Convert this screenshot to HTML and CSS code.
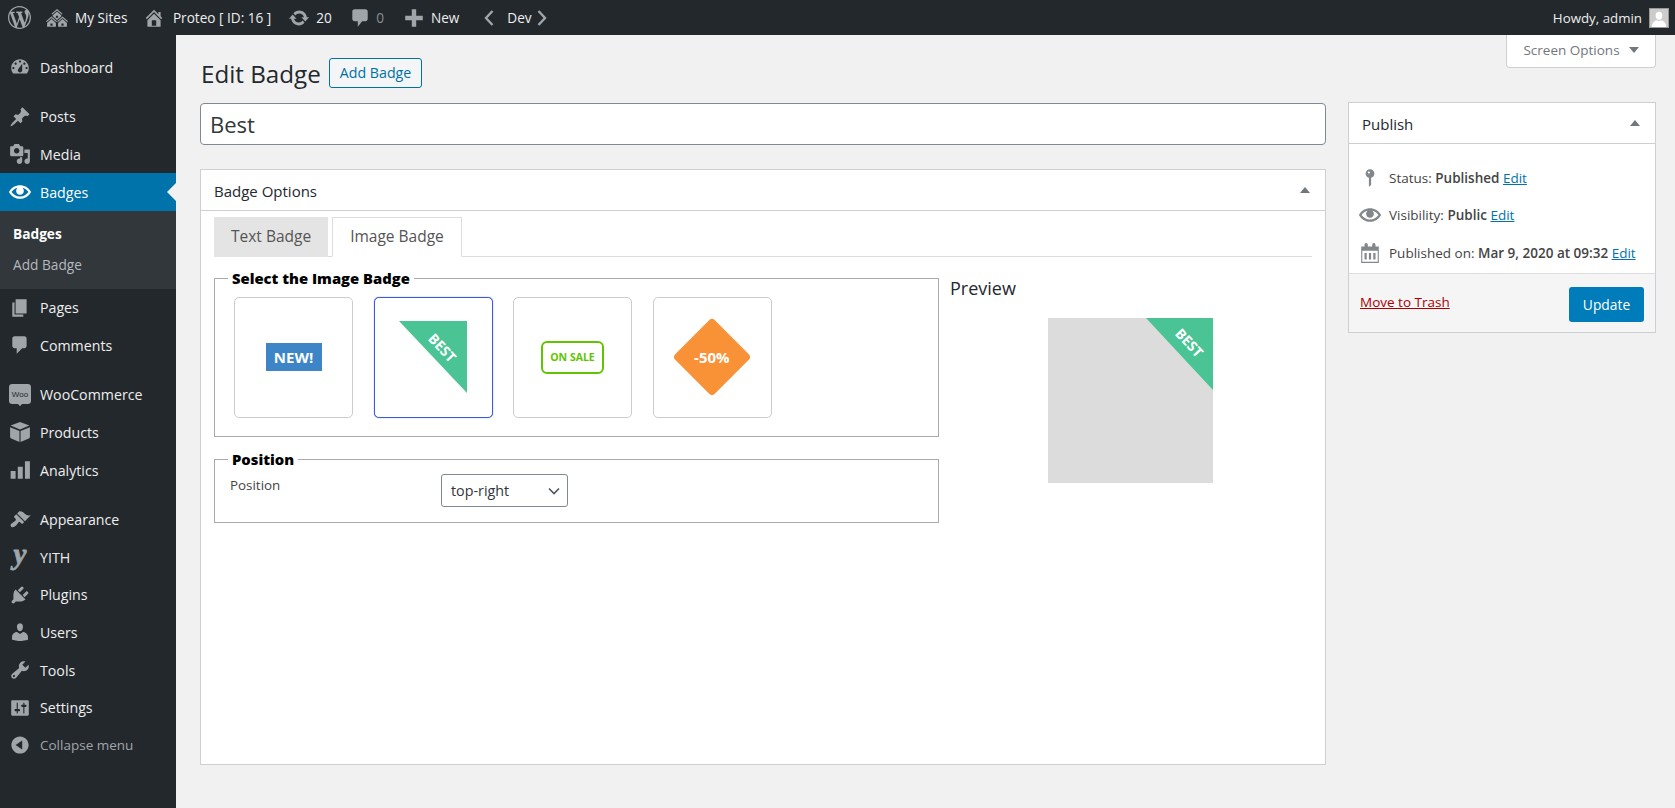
FILE: index.html
```html
<!DOCTYPE html>
<html lang="en">
<head>
   <meta charset="UTF-8">
   <title>Edit Badge</title>
   <link rel="stylesheet" href="styles.css">
</head>
<body>
   <header class="adminbar">
      <a class="bar-item bar-logo"><svg class="bar-icon logo-icon" viewBox="0 0 20 20"><path d="M20 10c0-5.51-4.49-10-10-10C4.48 0 0 4.49 0 10c0 5.52 4.48 10 10 10 5.51 0 10-4.48 10-10zM7.78 15.37L4.37 6.22c.55-.02 1.17-.08 1.17-.08.5-.06.44-1.13-.06-1.11 0 0-1.45.11-2.37.11-.18 0-.37 0-.58-.01C4.12 2.69 6.87 1.11 10 1.11c2.33 0 4.45.87 6.05 2.34-.68-.11-1.65.39-1.65 1.58 0 .74.45 1.36.9 2.1.35.61.55 1.36.55 2.46 0 1.49-1.4 5-1.4 5l-3.03-8.37c.54-.02.82-.17.82-.17.5-.05.44-1.25-.06-1.22 0 0-1.44.12-2.38.12-.87 0-2.33-.12-2.33-.12-.5-.03-.56 1.2-.06 1.22l.92.08 1.26 3.41zM17.41 10c.24-.64.74-1.87.43-4.25.7 1.29 1.05 2.71 1.05 4.25 0 3.29-1.73 6.24-4.4 7.78.97-2.59 1.94-5.2 2.92-7.78zM6.1 18.09C3.12 16.65 1.11 13.53 1.11 10c0-1.3.23-2.48.72-3.59C3.25 10.3 4.67 14.2 6.1 18.09zm4.03-6.63l2.58 6.98c-.86.29-1.76.45-2.71.45-.79 0-1.57-.11-2.29-.33.81-2.38 1.62-4.74 2.42-7.1z"/></svg></a>
      <a class="bar-item bar-sites"><svg class="bar-icon" viewBox="0 0 20 20"><path d="M14.27 6.87L10 3.14 5.73 6.87 5 6.14l5-4.38 5 4.38zM14 8.42l-4.05 3.43L6 8.38v-.74l4-3.5 4 3.5v.78zM11 9.7V8H9v1.7h2zm-1.73 4.03L5 10 .73 13.73 0 13l5-4.38L10 13zm10 0L15 10l-4.27 3.73L10 13l5-4.38L20 13zM5 11l4 3.5V18H1v-3.5zm10 0l4 3.5V18h-8v-3.5zm-9 6v-2H4v2h2zm10 0v-2h-2v2h2z"/></svg>My Sites</a>
      <a class="bar-item bar-home"><svg class="bar-icon" viewBox="0 0 20 20"><path d="M16 8.5l1.53 1.53-1.06 1.06L10 4.62l-6.47 6.47-1.06-1.06L10 2.5l4 4v-2h2v4zm-6-2.46l6 5.99V18H4v-5.97zM12 17v-5H8v5h4z"/></svg>Proteo [ ID: 16 ]</a>
      <a class="bar-item bar-updates"><svg class="bar-icon" viewBox="0 0 20 20"><path d="M10.2 3.28c3.53 0 6.43 2.61 6.92 6h2.08l-3.5 4-3.5-4h2.32c-.45-1.97-2.21-3.44-4.32-3.44-1.45 0-2.73.71-3.54 1.78L4.95 5.66C6.23 4.2 8.11 3.28 10.2 3.28zm-.4 13.44c-3.52 0-6.43-2.61-6.92-6H.8l3.5-4c1.17 1.33 2.33 2.67 3.5 4H5.48c.45 1.97 2.21 3.44 4.32 3.44 1.45 0 2.73-.71 3.54-1.78l1.71 1.95c-1.28 1.46-3.15 2.39-5.25 2.39z"/></svg>20</a>
      <a class="bar-item bar-comments"><svg class="bar-icon" viewBox="0 0 20 20"><path d="M5 2h10c1.100 0 2 .9 2 2v7c0 1.100-.9 2-2 2h-3l-4 5v-5H5c-1.100 0-2-.9-2-2V4c0-1.100.9-2 2-2z"/></svg><span class="muted">0</span></a>
      <a class="bar-item bar-new"><svg class="bar-icon" viewBox="0 0 20 20"><path d="M18 8v4h-6v6H8v-6H2V8h6V2h4v6h6z"/></svg>New</a>
      <a class="bar-item bar-dev"><svg class="bar-chevron" viewBox="0 0 12 18"><path d="M9.500 2L3 9l6.500 7"/></svg>Dev<svg class="bar-chevron" viewBox="0 0 12 18"><path d="M2.500 2L9 9l-6.500 7"/></svg></a>
      <a class="bar-item bar-user">Howdy, admin<span class="avatar"><svg viewBox="0 0 20 20"><path d="M10 3c2.300 0 3.800 1.800 3.800 4.300S12.300 12 10 12 6.200 9.800 6.200 7.300 7.700 3 10 3zM2 20c0-4 2.500-7 5.500-7.500 1.600 1 3.400 1 5 0C15.500 13 18 16 18 20z"/></svg></span></a>
   </header>

   <div class="layout">
      <nav class="sidebar">
         <a class="menu-item"><svg class="menu-icon" viewBox="0 0 20 20"><path d="M3.760 16h12.480c1.100-1.370 1.760-3.110 1.760-5 0-4.420-3.580-8-8-8s-8 3.580-8 8c0 1.890.660 3.630 1.760 5zM10 4c.550 0 1 .450 1 1s-.450 1-1 1-1-.450-1-1 .450-1 1-1zM6 6c.550 0 1 .450 1 1s-.450 1-1 1-1-.450-1-1 .450-1 1-1zm8 0c.550 0 1 .450 1 1s-.450 1-1 1-1-.450-1-1 .450-1 1-1zm-5.370 5.550L12 7v6c0 1.100-.9 2-2 2s-2-.9-2-2c0-.570.240-1.080.630-1.450zM4 10c.550 0 1 .450 1 1s-.450 1-1 1-1-.450-1-1 .450-1 1-1zm12 0c.550 0 1 .450 1 1s-.450 1-1 1-1-.450-1-1 .450-1 1-1z"/></svg>Dashboard</a>

         <a class="menu-item menu-gap"><svg class="menu-icon" viewBox="0 0 20 20"><path d="M10.440 3.020l1.820-1.820 6.360 6.350-1.830 1.820c-1.050-.680-2.480-.570-3.410.360l-.750.750c-.920.930-1.040 2.350-.350 3.410l-1.830 1.820-2.410-2.410-2.800 2.790c-.420.420-3.380 2.710-3.800 2.290s1.860-3.390 2.280-3.810l2.790-2.790L4.100 9.360l1.830-1.820c1.050.690 2.480.570 3.400-.360l.750-.750c.930-.920 1.050-2.350.360-3.410z"/></svg>Posts</a>
         <a class="menu-item"><svg class="menu-icon" viewBox="0 0 20 20"><path d="M13 11V4c0-.550-.450-1-1-1h-1.670L9 1H5L3.670 3H2c-.550 0-1 .450-1 1v7c0 .550.450 1 1 1h10c.550 0 1-.450 1-1zM7 4.500c1.380 0 2.500 1.120 2.500 2.500S8.380 9.500 7 9.500 4.500 8.380 4.500 7 5.620 4.500 7 4.500zM14 6h5v10.500c0 1.380-1.120 2.500-2.500 2.500S14 17.880 14 16.500s1.120-2.500 2.500-2.500c.170 0 .340.020.500.050V9h-3V6zm-4 8.050V13h2v3.500c0 1.380-1.120 2.500-2.500 2.500S7 17.880 7 16.500 8.120 14 9.500 14c.170 0 .340.020.500.050z"/></svg>Media</a>
         <a class="menu-item active"><svg class="menu-icon" viewBox="0 0 20 20"><path d="M19.700 9.400C17.700 6 14 3.900 10 3.900S2.300 6 .3 9.400L0 10l.3.6c2 3.400 5.700 5.500 9.700 5.500s7.700-2.100 9.700-5.500l.3-.6-.3-.6zM10 14.100c-3.100 0-6-1.600-7.700-4.100C3.600 8 5.700 6.600 8 6.100c-.9.6-1.500 1.700-1.500 2.900 0 1.900 1.600 3.500 3.500 3.500s3.500-1.600 3.500-3.500c0-1.200-.6-2.300-1.500-2.900 2.300.5 4.400 1.900 5.700 3.900-1.700 2.500-4.600 4.100-7.700 4.100z"/></svg>Badges</a>
         <div class="submenu">
            <a class="sub-item current">Badges</a>
            <a class="sub-item">Add Badge</a>
         </div>
         <a class="menu-item"><svg class="menu-icon" viewBox="0 0 20 20"><path d="M6 15V2h10v13H6zm-1 1h8v2H3V5h2v11z"/></svg>Pages</a>
         <a class="menu-item"><svg class="menu-icon" viewBox="0 0 20 20"><path d="M5 2h9c1.100 0 2 .9 2 2v7c0 1.100-.9 2-2 2h-2l-5 5v-5H5c-1.100 0-2-.9-2-2V4c0-1.100.9-2 2-2z"/></svg>Comments</a>

         <a class="menu-item menu-gap"><svg class="menu-icon" viewBox="0 0 22 22"><path d="M3 0h16c1.700 0 3 1.300 3 3v14c0 1.700-1.300 3-3 3h-6l-2 2.200L9 20H3c-1.700 0-3-1.300-3-3V3c0-1.700 1.300-3 3-3z"/><text class="woo-text" x="11" y="13" text-anchor="middle">Woo</text></svg>WooCommerce</a>
         <a class="menu-item"><svg class="menu-icon" viewBox="0 0 20 20"><path d="M10 .8l8.500 3.400-8.500 3.600-8.500-3.600zM1 5.600l8.500 3.500V19L2 16a1.500 1.500 0 0 1-1-1.400zM19 5.600v9a1.500 1.500 0 0 1-1 1.400l-7.500 3V9.100z"/></svg>Products</a>
         <a class="menu-item"><svg class="menu-icon" viewBox="0 0 20 20"><path d="M1.500 11H6v7H1.500zM8 7h4.500v11H8zM14.500 2H19v16h-4.500z"/></svg>Analytics</a>

         <a class="menu-item menu-gap"><svg class="menu-icon" viewBox="0 0 20 20"><path d="M14.480 11.060L7.410 3.990l1.500-1.500c.5-.560 2.300-.470 3.510.320 1.210.8 1.430 1.280 2.910 2.100 1.180.640 2.450 1.260 4.450.85zm-.710.710L6.700 4.700 4.930 6.470c-.390.390-.390 1.020 0 1.410l1.060 1.060c.390.390.390 1.030 0 1.420-.6.6-1.430 1.110-2.210 1.690-.350.260-.7.530-1.010.840C1.430 13.230.990 15.130 2 16.060c.920.990 2.810.550 4.170-.8.310-.310.580-.660.840-1.010.580-.780 1.090-1.610 1.690-2.210.390-.390 1.020-.390 1.410 0l1.060 1.060c.390.390 1.020.390 1.410 0z"/></svg>Appearance</a>
         <a class="menu-item"><span class="yith-glyph">y</span>YITH</a>
         <a class="menu-item"><svg class="menu-icon" viewBox="0 0 20 20"><path d="M13.110 4.360L9.870 7.600 8 5.730l3.240-3.240c.350-.340 1.050-.2 1.560.320.520.510.660 1.210.310 1.550zm-8 1.770l.910-1.120 9.010 9.010-1.190.840c-.710.710-2.630 1.160-3.820 1.160H6.140L4.900 17.260c-.590.590-1.540.590-2.120 0-.590-.580-.590-1.530 0-2.120l1.240-1.240v-3.880c0-1.130.4-3.190 1.090-3.890zm7.260 3.970l3.240-3.240c.340-.350 1.040-.210 1.550.310.520.510.660 1.210.31 1.550l-3.240 3.250z"/></svg>Plugins</a>
         <a class="menu-item"><svg class="menu-icon" viewBox="0 0 20 20"><path d="M10 9.250c-2.270 0-2.730-3.440-2.730-3.440C7 4.020 7.820 2 9.970 2c2.160 0 2.980 2.020 2.710 3.810 0 0-.410 3.440-2.680 3.440zm0 2.570L12.720 10c2.390 0 4.520 2.330 4.520 4.530v2.490s-3.650 1.130-7.240 1.130c-3.650 0-7.240-1.130-7.240-1.130v-2.490c0-2.250 1.940-4.480 4.470-4.480z"/></svg>Users</a>
         <a class="menu-item"><svg class="menu-icon" viewBox="0 0 20 20"><path d="M16.680 9.770c-1.340 1.340-3.300 1.670-4.950.990l-5.410 6.520c-.990.990-2.590.990-3.580 0s-.990-2.590 0-3.570l6.520-5.420c-.680-1.650-.350-3.610.990-4.950 1.280-1.280 3.120-1.620 4.720-1.060l-2.890 2.890 2.820 2.820 2.860-2.870c.530 1.580.180 3.390-1.080 4.650zM3.810 16.210c.4.390 1.040.390 1.430 0 .4-.4.4-1.040 0-1.430-.390-.4-1.030-.4-1.430 0-.390.390-.390 1.030 0 1.430z"/></svg>Tools</a>
         <a class="menu-item"><svg class="menu-icon" viewBox="0 0 20 20"><path d="M18 16V4c0-.550-.450-1-1-1H3c-.550 0-1 .450-1 1v12c0 .550.450 1 1 1h14c.550 0 1-.450 1-1zM8 11h1c.550 0 1 .450 1 1s-.450 1-1 1H8v1.500c0 .280-.220.5-.5.5s-.5-.220-.5-.5V13H6c-.550 0-1-.450-1-1s.450-1 1-1h1V5.500c0-.280.220-.5.5-.5s.5.220.5.5V11zm5-2h-1c-.550 0-1-.450-1-1s.450-1 1-1h1V5.500c0-.280.220-.5.5-.5s.5.220.5.5V7h1c.550 0 1 .450 1 1s-.450 1-1 1h-1v5.500c0 .280-.220.5-.5.5s-.5-.220-.5-.5V9z"/></svg>Settings</a>
         <a class="menu-item collapse"><svg class="menu-icon" viewBox="0 0 20 20"><path d="M10 2.160c4.330 0 7.840 3.510 7.840 7.840s-3.510 7.840-7.840 7.840S2.160 14.330 2.160 10 5.710 2.160 10 2.160zm2 11.840V6l-6 4z"/></svg>Collapse menu</a>
      </nav>

      <main class="wrap">
         <div class="col-main">
            <div class="page-head">
               <h1>Edit Badge</h1>
               <a class="add-btn">Add Badge</a>
            </div>
            <input class="title-input" type="text" value="Best">

            <section class="postbox options-box">
               <div class="postbox-head">
                  <h2>Badge Options</h2>
                  <span class="toggle"></span>
               </div>
               <div class="tabs">
                  <a class="tab">Text Badge</a>
                  <a class="tab tab-on">Image Badge</a>
               </div>
               <div class="panel">
                  <div class="panel-left">
                     <fieldset class="group">
                        <legend>Select the Image Badge</legend>
                        <div class="cards">
                           <div class="card">
                              <span class="badge-new">NEW!</span>
                           </div>
                           <div class="card card-on">
                              <div class="badge-best">
                                 <svg viewBox="0 0 68 72"><path d="M0 0H68V72z"/></svg>
                                 <span>BEST</span>
                              </div>
                           </div>
                           <div class="card">
                              <span class="badge-sale">ON SALE</span>
                           </div>
                           <div class="card">
                              <div class="badge-off"><span>-50%</span></div>
                           </div>
                        </div>
                     </fieldset>
                     <fieldset class="group group-position">
                        <legend>Position</legend>
                        <div class="field-row">
                           <label class="field-label">Position</label>
                           <div class="select-box">
                              <select><option>top-right</option></select>
                              <svg viewBox="0 0 12 8"><path d="M1 1.500l5 5 5-5"/></svg>
                           </div>
                        </div>
                     </fieldset>
                  </div>
                  <div class="preview">
                     <h3>Preview</h3>
                     <div class="preview-img">
                        <div class="preview-ribbon">
                           <svg viewBox="0 0 67 72"><path d="M0 0H67V72z"/></svg>
                           <span>BEST</span>
                        </div>
                     </div>
                  </div>
               </div>
            </section>
         </div>

         <aside class="col-side">
            <a class="screen-tab">Screen Options <i class="caret"></i></a>
            <section class="postbox publish">
               <div class="postbox-head">
                  <h2>Publish</h2>
                  <span class="toggle"></span>
               </div>
               <div class="publish-rows">
                  <div class="pub-row"><svg class="pub-icon" viewBox="0 0 20 20"><path fill-rule="evenodd" d="M14 6c0 1.860-1.280 3.410-3 3.860V16c0 1-2 2-2 2V9.860c-1.720-.450-3-2-3-3.860 0-2.210 1.790-4 4-4s4 1.790 4 4zM8 5c0 .550.450 1 1 1s1-.450 1-1-.450-1-1-1-1 .450-1 1z"/></svg><span>Status: <b>Published</b> <a>Edit</a></span></div>
                  <div class="pub-row"><svg class="pub-icon" viewBox="0 0 20 20"><path d="M19.700 9.400C17.700 6 14 3.900 10 3.900S2.300 6 .3 9.400L0 10l.3.6c2 3.400 5.700 5.500 9.700 5.500s7.700-2.100 9.700-5.500l.3-.6-.3-.6zM10 14.100c-3.100 0-6-1.600-7.700-4.100C3.600 8 5.700 6.600 8 6.100c-.9.6-1.500 1.700-1.500 2.900 0 1.900 1.600 3.500 3.500 3.500s3.500-1.600 3.500-3.500c0-1.200-.6-2.300-1.500-2.900 2.300.5 4.400 1.900 5.700 3.900-1.700 2.500-4.600 4.100-7.700 4.100z"/></svg><span>Visibility: <b>Public</b> <a>Edit</a></span></div>
                  <div class="pub-row"><svg class="pub-icon" viewBox="0 0 20 20"><path fill-rule="evenodd" d="M15 4h3v15H2V4h3V2.500a1.500 1.500 0 0 1 3 0V4h4V2.500a1.500 1.500 0 0 1 3 0zM3 18h14V8H3zM5 10h2v6H5zM9 10h2v6H9zM13 10h2v6h-2z"/></svg><span>Published on: <b>Mar 9, 2020 at 09:32</b> <a>Edit</a></span></div>
               </div>
               <div class="publish-foot">
                  <a class="trash">Move to Trash</a>
                  <a class="update-btn">Update</a>
               </div>
            </section>
         </aside>
      </main>
   </div>
</body>
</html>
```

FILE: styles.css
```css
* {
   box-sizing: border-box;
}

html, body {
   height: 100%;
}

body {
   margin: 0;
   background: #f1f1f1;
   color: #444;
   font-family: "Open Sans", "Noto Sans", sans-serif;
   font-size: 13.5px;
   overflow: hidden;
}

/* Admin bar */
.adminbar {
   display: flex;
   align-items: center;
   height: 35px;
   background: #23282d;
   color: #eee;
   font-size: 13.6px;
}

.bar-item {
   display: flex;
   align-items: center;
}

.bar-icon {
   width: 22px;
   height: 22px;
   fill: #a0a5aa;
   fill-rule: evenodd;
}

.logo-icon {
   width: 23px;
   height: 23px;
}

.bar-logo { margin-left: 8px; }
.bar-sites { margin-left: 15px; gap: 7px; }
.bar-home { margin-left: 15.5px; gap: 8px; }
.bar-updates { margin-left: 17px; gap: 6px; }
.bar-comments { margin-left: 17.3px; gap: 5px; }
.bar-new { margin-left: 19px; gap: 6px; }
.bar-dev { margin-left: 24px; gap: 4px; }

.muted {
   color: #8a8f94;
}

.bar-chevron {
   width: 12px;
   height: 18px;
   fill: none;
   stroke: #a0a5aa;
   stroke-width: 2.4;
}

.bar-dev .bar-chevron:first-child {
   margin-right: 8px;
}

.bar-user {
   margin-left: auto;
   margin-right: 6px;
   gap: 7px;
   font-size: 13.3px;
}

.avatar {
   display: block;
   width: 20px;
   height: 20px;
   background: #ccc;
   border: 1px solid #999;
}

.avatar svg {
   display: block;
   fill: #fff;
}

/* Sidebar */
.layout {
   display: flex;
   height: calc(100% - 35px);
}

.sidebar {
   flex: 0 0 176px;
   padding-top: 13.5px;
   background: #23282d;
   color: #eee;
   font-size: 14.2px;
}

.menu-item {
   display: flex;
   align-items: center;
   position: relative;
   height: 37.6px;
   padding-left: 9px;
}

.menu-gap {
   margin-top: 12px;
}

.menu-icon {
   flex: none;
   width: 22px;
   height: 22px;
   margin-right: 9px;
   fill: #a0a5aa;
   fill-rule: evenodd;
}

.woo-text {
   fill: #23282d;
   font-family: "Liberation Sans", sans-serif;
   font-size: 8px;
}

.yith-glyph {
   flex: none;
   width: 22px;
   margin: -6px 9px 0 0;
   color: #a0a5aa;
   font-family: "Liberation Serif", serif;
   font-size: 29px;
   font-style: italic;
   font-weight: bold;
   line-height: 22px;
   text-align: center;
   -webkit-text-stroke: 0.8px #a0a5aa;
}

.active {
   background: #0073aa;
   color: #fff;
}

.active .menu-icon {
   fill: #fff;
}

.active::after {
   content: "";
   position: absolute;
   top: 10px;
   right: 0;
   border: 9px solid transparent;
   border-right-color: #f1f1f1;
   border-left-width: 0;
}

.submenu {
   display: flex;
   flex-direction: column;
   height: 78px;
   padding-top: 8px;
   background: #32373c;
   font-size: 13.7px;
}

.sub-item {
   height: 31px;
   padding-left: 13px;
   line-height: 30px;
   color: #b4b9be;
}

.sub-item.current {
   color: #fff;
   font-weight: 700;
}

.collapse {
   color: #a0a5aa;
   font-size: 13.5px;
}

/* Main area */
.wrap {
   flex: 1;
   display: flex;
   gap: 22px;
   padding: 0 19px 0 24px;
}

.col-main {
   width: 1126px;
   padding-top: 23px;
}

.page-head {
   display: flex;
   align-items: center;
   gap: 8px;
   height: 30px;
}

h1 {
   margin: 0;
   color: #23282d;
   font-size: 24.2px;
   font-weight: 400;
   padding-left: 1px;
}

.add-btn {
   display: block;
   height: 30px;
   padding: 0 10px;
   border: 1px solid #0071a1;
   border-radius: 3px;
   background: #f3f5f6;
   color: #0071a1;
   font-size: 14.2px;
   line-height: 27px;
}

.title-input {
   display: block;
   width: 100%;
   height: 42px;
   margin-top: 15px;
   padding: 0 9px;
   border: 1px solid #7e8993;
   border-radius: 4px;
   background: #fff;
   color: #32373c;
   font-family: inherit;
   font-size: 22px;
}

.postbox {
   background: #fff;
   border: 1px solid #ccd0d4;
}

.options-box {
   display: flex;
   flex-direction: column;
   height: 596px;
   margin-top: 24px;
}

.postbox-head {
   display: flex;
   align-items: center;
   justify-content: space-between;
   height: 41px;
   padding: 0 13px;
   border-bottom: 1px solid #ccd0d4;
}

.postbox-head h2 {
   margin: 0;
   padding-top: 1px;
   color: #23282d;
   font-size: 15px;
   font-weight: 400;
}

.toggle {
   margin-right: 2px;
   border: 5px solid transparent;
   border-top-width: 0;
   border-bottom: 6px solid #72777c;
}

.tabs {
   display: flex;
   gap: 4px;
   height: 46px;
   margin: 0 13px;
   padding-top: 6px;
   border-bottom: 1px solid #ddd;
}

.tab {
   height: 40px;
   padding: 0 16px;
   background: #e4e4e4;
   border: 1px solid #e4e4e4;
   color: #555;
   font-size: 15.5px;
   line-height: 37px;
}

.tab-on {
   padding: 0 17px;
   background: #fff;
   border-color: #ddd;
   border-bottom-color: #fff;
}

.panel {
   display: flex;
   gap: 11px;
   margin: 12px 0 0 13px;
}

.panel-left {
   width: 725px;
}

.group {
   margin: 0;
   padding: 9.5px 15px 18px 19px;
   border: 1px solid #aaa;
}

.group legend {
   margin-left: -6px;
   padding: 0 4px;
   color: #000;
   font-size: 14.8px;
   font-weight: 800;
   line-height: 18px;
}

.group-position {
   height: 72.5px;
   margin-top: 13.5px;
   padding: 0 15px;
}

.group-position legend {
   margin-left: -2px;
}

.cards {
   display: flex;
   gap: 20.5px;
}

.card {
   display: flex;
   align-items: center;
   justify-content: center;
   position: relative;
   width: 119px;
   height: 121px;
   border: 1px solid #ccc;
   border-radius: 5px;
   background: #fff;
}

.card-on {
   border-color: #3b5bdb;
   box-shadow: 0 0 1px #3b5bdb;
}

.badge-new {
   display: block;
   width: 56px;
   height: 28px;
   background: #3d85c6;
   color: #fff;
   font-size: 15px;
   font-weight: 700;
   line-height: 28px;
   text-align: center;
}

.badge-best {
   position: relative;
   width: 68px;
   height: 72px;
}

.badge-best svg,
.preview-ribbon svg {
   display: block;
   fill: #4ac494;
}

.badge-best span {
   position: absolute;
   top: 17px;
   right: 8px;
   color: #fff;
   font-size: 14px;
   font-weight: 700;
   transform: rotate(47deg);
}

.badge-sale {
   display: block;
   width: 63px;
   height: 33px;
   border: 2.5px solid #61c400;
   border-radius: 6px;
   color: #61c400;
   font-size: 10.5px;
   font-weight: 700;
   line-height: 28px;
   text-align: center;
}

.badge-off {
   display: flex;
   align-items: center;
   justify-content: center;
   width: 56px;
   height: 56px;
   border-radius: 4px;
   background: #f99137;
   transform: rotate(45deg);
}

.badge-off span {
   color: #fff;
   font-size: 15px;
   font-weight: 700;
   transform: rotate(-45deg);
}

.field-row {
   display: flex;
   align-items: flex-start;
}

.field-label {
   flex: 0 0 211px;
   padding-top: 7.5px;
   color: #444;
   font-size: 13.4px;
}

.select-box {
   position: relative;
   width: 127px;
   height: 33px;
   margin-top: 5.5px;
}

.select-box select {
   width: 100%;
   height: 100%;
   padding: 0 9px;
   border: 1px solid #7e8993;
   border-radius: 3px;
   background: #fff;
   color: #32373c;
   font-family: inherit;
   font-size: 14.3px;
   appearance: none;
}

.select-box svg {
   position: absolute;
   top: 13px;
   right: 8px;
   width: 12px;
   height: 8px;
   fill: none;
   stroke: #50575e;
   stroke-width: 1.6;
}

.preview {
   padding-top: 6.5px;
}

.preview h3 {
   margin: 0;
   color: #23282d;
   font-size: 18px;
   font-weight: 400;
}

.preview-img {
   position: relative;
   width: 165px;
   height: 165px;
   margin: 18px 0 0 98px;
   background: #dcdcdc;
}

.preview-ribbon {
   position: absolute;
   top: 0;
   right: 0;
   width: 67px;
   height: 72px;
}

.preview-ribbon span {
   position: absolute;
   top: 15px;
   right: 7px;
   color: #fff;
   font-size: 14px;
   font-weight: 700;
   transform: rotate(47deg);
}

/* Right column */
.col-side {
   width: 308px;
}

.screen-tab {
   display: flex;
   align-items: center;
   justify-content: center;
   gap: 9px;
   width: 150px;
   height: 33px;
   margin-left: auto;
   padding-bottom: 2px;
   border: 1px solid #ccd0d4;
   border-top: 0;
   border-radius: 0 0 4px 4px;
   background: #fff;
   color: #72777c;
   font-size: 13.5px;
}

.caret {
   border: 5px solid transparent;
   border-bottom-width: 0;
   border-top: 6px solid #72777c;
}

.publish {
   margin-top: 34px;
}

.publish-rows {
   display: flex;
   flex-direction: column;
   height: 130px;
   padding-top: 15px;
   border-bottom: 1px solid #ddd;
}

.pub-row {
   display: flex;
   align-items: center;
   height: 37.5px;
   padding-left: 10px;
   font-size: 13.5px;
   white-space: nowrap;
}

.pub-row b {
   font-weight: 600;
}

.pub-icon {
   flex: none;
   width: 22px;
   height: 22px;
   margin-right: 8px;
   fill: #82878c;
}

.pub-row a {
   color: #0073aa;
   text-decoration: underline;
}

.publish-foot {
   display: flex;
   align-items: center;
   justify-content: space-between;
   height: 58px;
   padding: 0 11px;
   background: #f5f5f5;
}

.trash {
   margin-bottom: 3px;
   color: #a00;
   font-size: 13.5px;
   text-decoration: underline;
}

.update-btn {
   width: 75px;
   height: 35px;
   margin-top: 2px;
   border-radius: 3px;
   background: #007cba;
   color: #fff;
   font-size: 13.8px;
   line-height: 35px;
   text-align: center;
}
```
